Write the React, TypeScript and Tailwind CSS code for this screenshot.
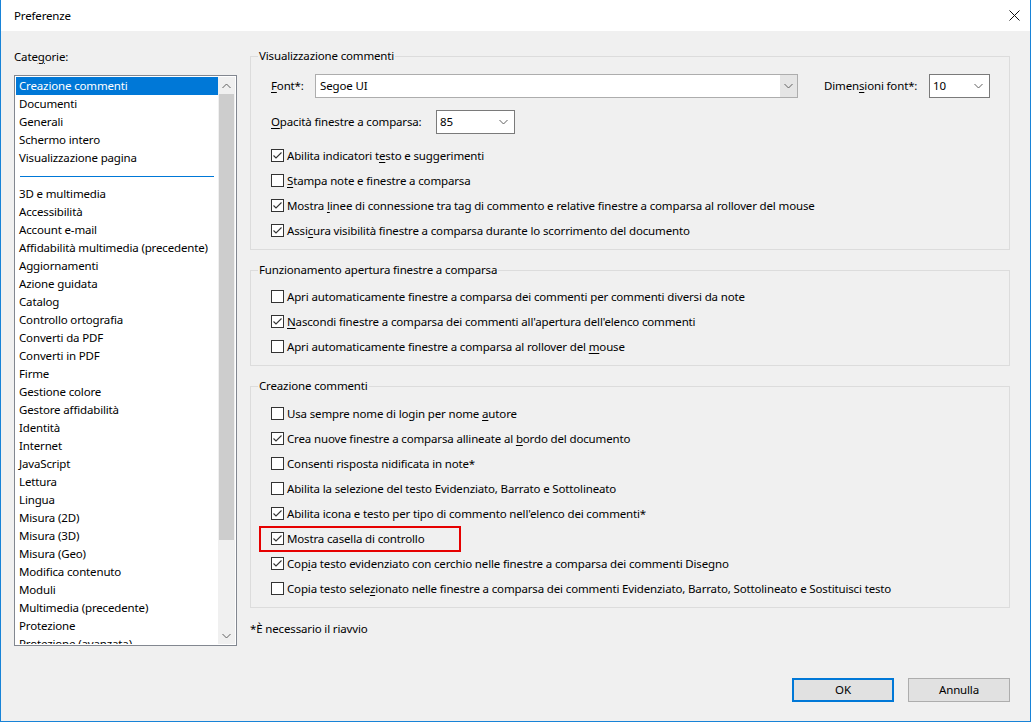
import React from 'react';

// Windows-like access key: "&" marks the underlined letter
function Label({ text }: { text: string }) {
  const i = text.indexOf('&');
  if (i < 0) return <>{text}</>;
  return (
    <>
      {text.slice(0, i)}
      <u className="underline underline-offset-2">{text[i + 1]}</u>
      {text.slice(i + 2)}
    </>
  );
}

function Chevron({ up = false }: { up?: boolean }) {
  return (
    <svg width="9" height="6" viewBox="0 0 9 6" className="shrink-0">
      <path
        d={up ? 'M0.5 5 L4.5 1 L8.5 5' : 'M0.5 1 L4.5 5 L8.5 1'}
        fill="none"
        stroke="#606060"
        strokeWidth="1"
      />
    </svg>
  );
}

function Checkbox({ checked }: { checked: boolean }) {
  return (
    <div className="w-[13px] h-[13px] shrink-0 border border-[#333333] bg-white flex items-center justify-center">
      {checked && (
        <svg width="11" height="11" viewBox="0 0 11 11">
          <path d="M1.5 5.5 L4 8 L9.5 2.5" fill="none" stroke="#333333" strokeWidth="1.1" />
        </svg>
      )}
    </div>
  );
}

function CheckRow({ text, checked, highlight = false }: { text: string; checked: boolean; highlight?: boolean }) {
  return (
    <div className="relative h-[25px] flex items-center gap-[3px]">
      <Checkbox checked={checked} />
      <span className="whitespace-nowrap">
        <Label text={text} />
      </span>
      {highlight && (
        <div className="absolute -left-[12px] top-0 w-[202px] h-[26px] border-2 border-[#e60000]" />
      )}
    </div>
  );
}

function Group({ title, children, className = '' }: { title: string; children: React.ReactNode; className?: string }) {
  return (
    <fieldset className={`border border-[#dcdcdc] min-w-0 ${className}`}>
      <legend className="ml-[7px] px-[1px] h-[18px] leading-[18px]">{title}</legend>
      <div className="pl-[20px]">{children}</div>
    </fieldset>
  );
}

const categories: (string | null)[] = [
  'Creazione commenti',
  'Documenti',
  'Generali',
  'Schermo intero',
  'Visualizzazione pagina',
  null,
  '3D e multimedia',
  'Accessibilità',
  'Account e-mail',
  'Affidabilità multimedia (precedente)',
  'Aggiornamenti',
  'Azione guidata',
  'Catalog',
  'Controllo ortografia',
  'Converti da PDF',
  'Converti in PDF',
  'Firme',
  'Gestione colore',
  'Gestore affidabilità',
  'Identità',
  'Internet',
  'JavaScript',
  'Lettura',
  'Lingua',
  'Misura (2D)',
  'Misura (3D)',
  'Misura (Geo)',
  'Modifica contenuto',
  'Moduli',
  'Multimedia (precedente)',
  'Protezione',
  'Protezione (avanzata)',
];

const viewOptions = [
  { text: 'Abilita indicatori t&esto e suggerimenti', checked: true },
  { text: '&Stampa note e finestre a comparsa', checked: false },
  { text: 'Mostra &linee di connessione tra tag di commento e relative finestre a comparsa al rollover del mouse', checked: true },
  { text: 'Assi&cura visibilità finestre a comparsa durante lo scorrimento del documento', checked: true },
];

const popupOptions = [
  { text: 'Apri automaticamente finestre a comparsa dei commenti per commenti diversi da note', checked: false },
  { text: '&Nascondi finestre a comparsa dei commenti all\'apertura dell\'elenco commenti', checked: true },
  { text: 'Apri automaticamente finestre a comparsa al rollover del &mouse', checked: false },
];

const makingOptions = [
  { text: 'Usa sempre nome di login per nome &autore', checked: false },
  { text: 'Crea nuove finestre a comparsa allineate al &bordo del documento', checked: true },
  { text: 'Consenti risposta nidificata in note*', checked: false },
  { text: 'Abilita la selezione del testo Evidenziato, Barrato e Sottolineato', checked: false },
  { text: 'Abilita icona e testo per tipo di commento nell\'elenco dei commenti*', checked: true },
  { text: 'Mostra casella di controllo', checked: true, highlight: true },
  { text: 'Cop&ia testo evidenziato con cerchio nelle finestre a comparsa dei commenti Disegno', checked: true },
  { text: 'Copia testo sele&zionato nelle finestre a comparsa dei commenti Evidenziato, Barrato, Sottolineato e Sostituisci testo', checked: false },
];

export default function App() {
  return (
    <div className="w-[1031px] h-[722px] flex flex-col border-x border-b border-[#1883d7] bg-[#f0f0f0] text-[11.5px] tracking-[-0.15px] leading-[18px] text-black font-['Segoe_UI','Noto_Sans',sans-serif] overflow-hidden">
      {/* title bar */}
      <div className="h-[31px] shrink-0 bg-white flex items-center justify-between pl-[13px] pr-[9px]">
        <span>Preferenze</span>
        <svg width="11" height="11" viewBox="0 0 11 11" className="mr-[1px]">
          <path d="M0.5 0.5 L10.5 10.5 M10.5 0.5 L0.5 10.5" stroke="#111" strokeWidth="1" />
        </svg>
      </div>

      <div className="flex-1 flex min-h-0">
        {/* categories */}
        <div className="w-[236px] shrink-0 pl-[13px] pt-[17px]">
          <div className="h-[18px]">
            <Label text="Cate&gorie:" />
          </div>
          <div className="mt-[9px] h-[571px] border border-[#828790] bg-white flex p-[1px]">
            <div className="flex-1 overflow-hidden">
              {categories.map((c, i) =>
                c === null ? (
                  <div key={i} className="h-[18px] flex items-center px-[4px]">
                    <div className="w-full h-px bg-[#0078d7]" />
                  </div>
                ) : (
                  <div
                    key={i}
                    className={`h-[18px] pl-[3px] whitespace-nowrap ${i === 0 ? 'bg-[#0078d7] text-white' : ''}`}
                  >
                    {c}
                  </div>
                )
              )}
            </div>
            <div className="w-[17px] shrink-0 bg-[#f0f0f0] flex flex-col items-center">
              <div className="h-[17px] flex items-center justify-center">
                <Chevron up />
              </div>
              <div className="w-[15px] h-[446px] bg-[#cdcdcd]" />
              <div className="flex-1" />
              <div className="h-[17px] flex items-center justify-center">
                <Chevron />
              </div>
            </div>
          </div>
        </div>

        {/* settings */}
        <div className="flex-1 flex flex-col pl-[13px] pr-[20px]">
          <Group title="Visualizzazione commenti" className="mt-[16px] pb-[6px]">
            <div className="mt-[9px] h-[24px] flex items-center">
              <span className="w-[44px]">
                <Label text="&Font*:" />
              </span>
              <div className="w-[483px] h-[24px] border border-[#adadad] bg-white flex">
                <div className="flex-1 pl-[4px] leading-[22px]">Segoe UI</div>
                <div className="w-[17px] bg-[#e5e5e5] flex items-center justify-center">
                  <Chevron />
                </div>
              </div>
              <span className="ml-[26px] w-[105px]">
                <Label text="Dimen&sioni font*:" />
              </span>
              <div className="w-[61px] h-[24px] border border-[#7a7a7a] bg-white flex items-center justify-between pl-[3px] pr-[6px]">
                <span>10</span>
                <Chevron />
              </div>
            </div>
            <div className="mt-[12px] h-[24px] flex items-center">
              <span className="w-[165px]">
                <Label text="&Opacità finestre a comparsa:" />
              </span>
              <div className="w-[79px] h-[24px] border border-[#7a7a7a] bg-white flex items-center justify-between pl-[3px] pr-[6px]">
                <span>85</span>
                <Chevron />
              </div>
            </div>
            <div className="mt-[9px]">
              {viewOptions.map((o, i) => (
                <CheckRow key={i} text={o.text} checked={o.checked} />
              ))}
            </div>
          </Group>

          <Group title="Funzionamento apertura finestre a comparsa" className="mt-[11px] pb-[6px]">
            <div className="mt-[5px]">
              {popupOptions.map((o, i) => (
                <CheckRow key={i} text={o.text} checked={o.checked} />
              ))}
            </div>
          </Group>

          <Group title="Creazione commenti" className="mt-[11px] pb-[6px]">
            <div className="mt-[6px]">
              {makingOptions.map((o, i) => (
                <CheckRow key={i} text={o.text} checked={o.checked} highlight={o.highlight} />
              ))}
            </div>
          </Group>

          <div className="mt-[12px] h-[18px]">*È necessario il riavvio</div>

          <div className="mt-auto mb-[19px] flex justify-end gap-[14px]">
            <button className="w-[102px] h-[24px] bg-[#e1e1e1] border-2 border-[#0078d7]">OK</button>
            <button className="w-[102px] h-[24px] bg-[#e1e1e1] border border-[#adadad]">Annulla</button>
          </div>
        </div>
      </div>
    </div>
  );
}
